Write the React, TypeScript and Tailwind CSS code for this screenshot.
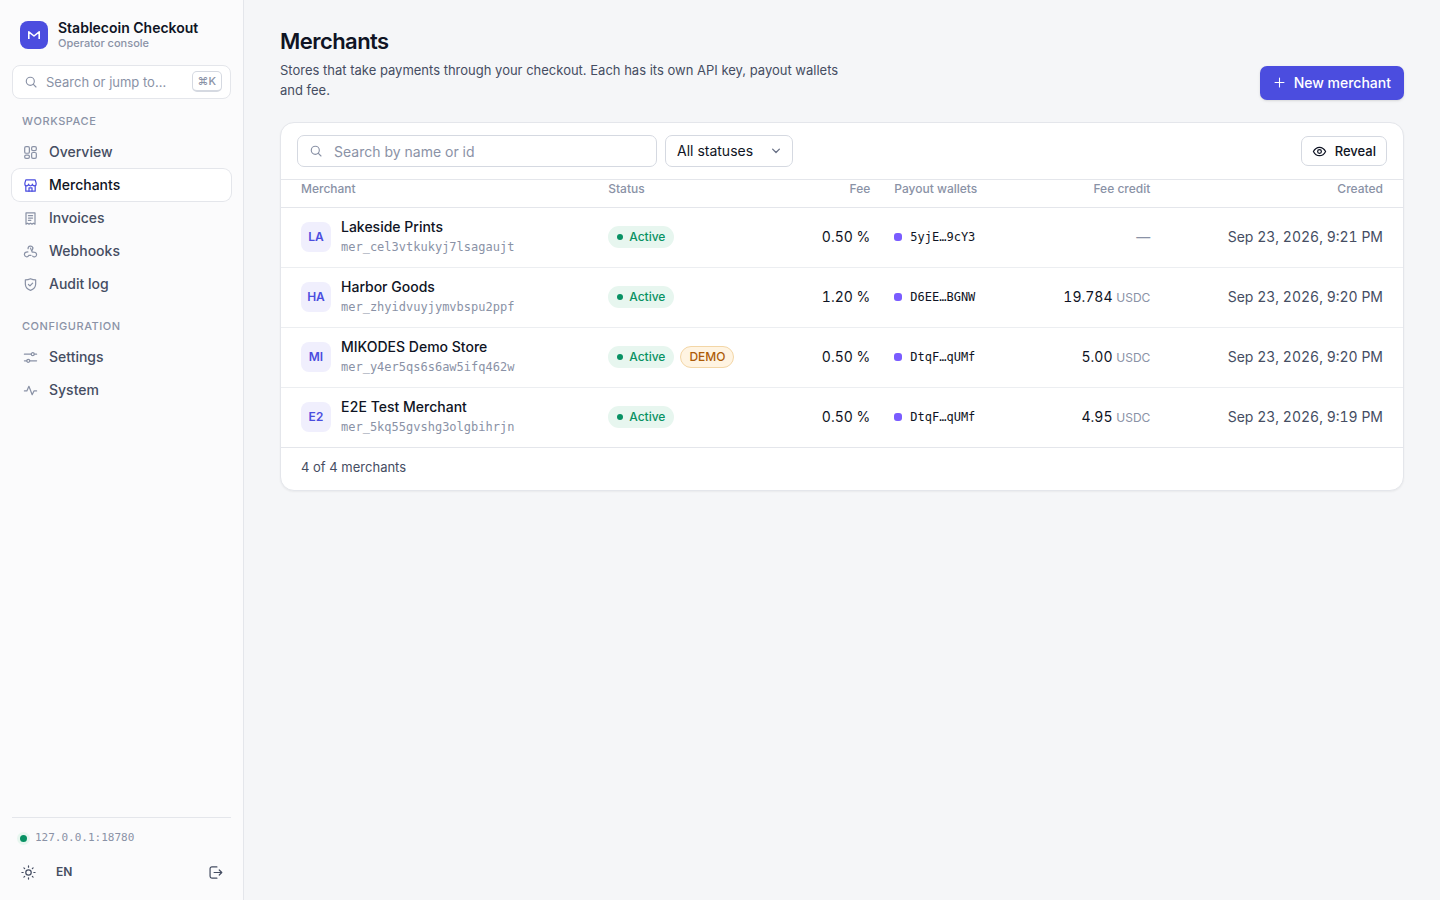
import React, { useState } from 'react';

type IconProps = { className?: string; children: React.ReactNode };

const Icon = ({ className = 'size-[15px]', children }: IconProps) => (
  <svg
    className={`shrink-0 ${className}`}
    viewBox="0 0 16 16"
    fill="none"
    stroke="currentColor"
    strokeWidth="1.3"
    strokeLinecap="round"
    strokeLinejoin="round"
    aria-hidden="true"
  >
    {children}
  </svg>
);

const icons = {
  overview: (
    <>
      <rect x="1.8" y="1.8" width="5" height="7" rx="1.4" />
      <rect x="9.2" y="1.8" width="5" height="4.2" rx="1.4" />
      <rect x="1.8" y="10.8" width="5" height="3.4" rx="1.4" />
      <rect x="9.2" y="8" width="5" height="6.2" rx="1.4" />
    </>
  ),
  merchants: (
    <>
      <path d="M3 2h10l1 3.5v.8a2 2 0 0 1-4 .1 2 2 0 0 1-4 0 2 2 0 0 1-4-.1v-.8z" />
      <path d="M3 8.200v5.800h10V8.200" />
      <path d="M6.400 14v-3.500h3.200V14" />
    </>
  ),
  invoices: (
    <>
      <path d="M3.200 2h9.600v12l-1.600-1-1.600 1L8 13l-1.600 1-1.600-1-1.600 1z" />
      <path d="M5.800 5h4.400M5.800 7.500h4.400M5.800 10h2.500" />
    </>
  ),
  webhooks: (
    <>
      <path d="M5.200 8.400c-2.300 0-3.700 1.300-3.700 2.900a2.400 2.400 0 0 0 4.600.9h2.400" />
      <path d="M5.400 5A2.600 2.600 0 0 1 10.500 4.200" />
      <path d="M8 4.400l1.900 4.300c2.600-.5 4.600.8 4.600 2.700a2.400 2.400 0 0 1-4.200 1.500" />
      <path d="M10.500 4.200 10 6.500" />
    </>
  ),
  audit: (
    <>
      <path d="M8 1.800c1.700.8 3.500 1.200 5.500 1.300v4.400c0 3.300-2.100 5.600-5.500 6.800-3.400-1.200-5.500-3.500-5.500-6.800V3.100C4.500 3 6.300 2.600 8 1.800z" />
      <path d="m5.800 8 1.600 1.500 2.900-3" />
    </>
  ),
  settings: (
    <>
      <path d="M1.500 4.500h7.300M12 4.500h2.500M1.500 11.500H4M7.200 11.500h7.300" />
      <circle cx="10.400" cy="4.500" r="1.600" />
      <circle cx="5.600" cy="11.500" r="1.600" />
    </>
  ),
  system: <path d="M1.500 8.500h2.600L6.300 3.500l3.500 9 1.900-4h2.800" />,
  search: (
    <>
      <circle cx="7.200" cy="7.200" r="4.600" />
      <path d="m10.700 10.700 3 3" />
    </>
  ),
  sun: (
    <>
      <circle cx="8" cy="8" r="2.900" />
      <path d="M8 1v1.300M8 13.700V15M1 8h1.300M13.700 8H15M3.100 3.100l.8.8M12.100 12.100l.8.8M3.100 12.900l.8-.8M12.100 3.900l.8-.8" />
    </>
  ),
  logout: (
    <>
      <path d="M9.500 2H4.200a2 2 0 0 0-2 2v8a2 2 0 0 0 2 2h5.300" />
      <path d="M6.500 8h8M12 5.300 14.700 8 12 10.700" />
    </>
  ),
  eye: (
    <>
      <path d="M1.500 8S3.800 3.500 8 3.500 14.500 8 14.500 8 12.200 12.500 8 12.500 1.500 8 1.500 8z" />
      <circle cx="8" cy="8" r="2" />
    </>
  ),
  plus: <path d="M8 2.500v11M2.500 8h11" />,
  chevron: <path d="m3.500 5.500 4.500 4.500 4.500-4.500" strokeWidth="1.8" />,
};

const workspace = [
  { label: 'Overview', icon: icons.overview },
  { label: 'Merchants', icon: icons.merchants, active: true },
  { label: 'Invoices', icon: icons.invoices },
  { label: 'Webhooks', icon: icons.webhooks },
  { label: 'Audit log', icon: icons.audit },
];

const configuration = [
  { label: 'Settings', icon: icons.settings },
  { label: 'System', icon: icons.system },
];

const merchants = [
  { initials: 'LA', name: 'Lakeside Prints', id: 'mer_cel3vtkukyj7lsagaujt', fee: '0.50 %', wallet: '5yjE…9cY3', credit: '', created: 'Sep 23, 2026, 9:21 PM' },
  { initials: 'HA', name: 'Harbor Goods', id: 'mer_zhyidvuyjymvbspu2ppf', fee: '1.20 %', wallet: 'D6EE…BGNW', credit: '19.784', created: 'Sep 23, 2026, 9:20 PM' },
  { initials: 'MI', name: 'MIKODES Demo Store', id: 'mer_y4er5qs6s6aw5ifq462w', demo: true, fee: '0.50 %', wallet: 'DtqF…qUMf', credit: '5.00', created: 'Sep 23, 2026, 9:20 PM' },
  { initials: 'E2', name: 'E2E Test Merchant', id: 'mer_5kq55gvshg3olgbihrjn', fee: '0.50 %', wallet: 'DtqF…qUMf', credit: '4.95', created: 'Sep 23, 2026, 9:19 PM' },
];

type NavItem = { label: string; icon: React.ReactNode; active?: boolean };

const NavGroup = ({ title, items }: { title: string; items: NavItem[] }) => (
  <div>
    <h2 className="px-[10px] text-[11px] leading-4 font-medium tracking-wider text-[#8a92a6] uppercase">{title}</h2>
    <ul className="mt-[7px] flex flex-col gap-px">
      {items.map((item) => (
        <li key={item.label}>
          <a
            href="#"
            aria-current={item.active ? 'page' : undefined}
            className={
              item.active
                ? 'flex h-8 items-center gap-[11px] rounded-lg bg-white px-[11px] font-medium text-[#0f1424] ring-1 ring-[#e4e6eb]'
                : 'flex h-8 items-center gap-[11px] rounded-lg px-[11px] font-medium text-[#454d62]'
            }
          >
            <span className={item.active ? 'text-[#4b4ddf]' : 'text-[#8a92a6]'}>
              <Icon>{item.icon}</Icon>
            </span>
            {item.label}
          </a>
        </li>
      ))}
    </ul>
  </div>
);

const Sidebar = () => (
  <aside className="flex w-[244px] shrink-0 flex-col border-r border-[#e4e6eb] bg-[#fbfbfc] px-3 pt-5 pb-[13px]">
    <div className="flex items-center gap-[10px] px-2">
      <div className="flex size-7 items-center justify-center rounded-lg bg-[#4b4ddf] text-white">
        <svg className="size-4" viewBox="0 0 16 16" fill="none" stroke="currentColor" strokeWidth="1.6" aria-hidden="true">
          <path d="M2.800 12V4.800L8 9l5.200-4.200V12" strokeLinejoin="round" />
        </svg>
      </div>
      <div>
        <p className="leading-4 font-semibold">Stablecoin Checkout</p>
        <p className="text-[11px] leading-[14px] font-medium text-[#8a92a6]">Operator console</p>
      </div>
    </div>

    <button type="button" className="mt-[15px] flex h-[34px] items-center gap-2 rounded-lg border border-[#e4e6eb] bg-white pr-2 pb-px pl-[11px] text-[13px] text-[#8a92a6]">
      <Icon className="size-[14px]">{icons.search}</Icon>
      <span className="flex-1 text-left">Search or jump to…</span>
      <kbd className="rounded-[5px] border border-b-2 border-[#d5d9e1] bg-white px-[5px] font-['Inter',sans-serif] text-[11px] leading-[18px] font-medium">⌘K</kbd>
    </button>

    <nav className="mt-[14px] flex flex-col gap-[18px]">
      <NavGroup title="Workspace" items={workspace} />
      <NavGroup title="Configuration" items={configuration} />
    </nav>

    <div className="mt-auto border-t border-[#e4e6eb] pt-3">
      <div className="flex items-center gap-2 px-2">
        <span className="size-[7px] rounded-full bg-[#079163] ring-3 ring-[#e7f6ef]" />
        <span className="font-['DejaVu_Sans_Mono',monospace] text-[11px] leading-4 text-[#8a92a6]">127.0.0.1:18780</span>
      </div>
      <div className="mt-[11px] flex items-center text-[#454d62]">
        <button type="button" aria-label="Toggle theme" className="flex h-[30px] w-8 items-center justify-center">
          <Icon>{icons.sun}</Icon>
        </button>
        <button type="button" className="ml-1 h-[30px] px-2 text-xs font-semibold">EN</button>
        <button type="button" aria-label="Sign out" className="ml-auto flex h-[30px] w-8 items-center justify-center">
          <Icon>{icons.logout}</Icon>
        </button>
      </div>
    </div>
  </aside>
);

const MerchantsTable = () => (
  <table className="w-full whitespace-nowrap">
    <thead>
      <tr className="h-[27px] border-b border-[#e4e6eb] text-xs leading-4 text-[#8a92a6] *:pb-2 *:font-medium">
        <th scope="col" className="pr-3 pl-5 text-left">Merchant</th>
        <th scope="col" className="px-3 text-left">Status</th>
        <th scope="col" className="px-3 text-right">Fee</th>
        <th scope="col" className="px-3 text-left">Payout wallets</th>
        <th scope="col" className="px-3 text-right">Fee credit</th>
        <th scope="col" className="pr-5 pl-3 text-right">Created</th>
      </tr>
    </thead>
    <tbody>
      {merchants.map((m) => (
        <tr key={m.id} className="h-[60px] border-b border-[#eceef1] tabular-nums last:border-b-0">
          <td className="pr-3 pl-5">
            <div className="flex items-center gap-[10px]">
              <span className="flex size-[30px] items-center justify-center rounded-lg bg-[#f0effd] text-xs font-semibold text-[#4b4ddf]">
                {m.initials}
              </span>
              <div>
                <p className="leading-5 font-medium">{m.name}</p>
                <p className="font-['DejaVu_Sans_Mono',monospace] text-xs leading-5 text-[#8a92a6]">{m.id}</p>
              </div>
            </div>
          </td>
          <td className="px-3">
            <div className="flex gap-[6px] text-xs font-medium">
              <span className="flex h-[22px] items-center gap-[6px] rounded-full bg-[#e7f6ef] px-[9px] text-[#079163]">
                <span className="size-[6px] rounded-full bg-[#079163]" />
                Active
              </span>
              {m.demo && (
                <span className="flex h-[22px] items-center rounded-full border border-[#f3d6a6] bg-[#fff4e2] px-2 text-[#ad5c08]">DEMO</span>
              )}
            </div>
          </td>
          <td className="px-3 text-right">{m.fee}</td>
          <td className="px-3">
            <div className="flex items-center gap-2">
              <span className="size-2 rounded-[3px] bg-[#7a5cff]" />
              <span className="font-['DejaVu_Sans_Mono',monospace] text-xs">{m.wallet}</span>
            </div>
          </td>
          <td className="px-3 text-right">
            {m.credit ? (
              <>
                {m.credit} <span className="text-xs text-[#8a92a6]">USDC</span>
              </>
            ) : (
              <span className="text-[#8a92a6]">—</span>
            )}
          </td>
          <td className="pr-5 pl-3 text-right text-[#454d62]">{m.created}</td>
        </tr>
      ))}
    </tbody>
  </table>
);

const App = () => {
  const [query, setQuery] = useState('');

  return (
    <div className="flex min-h-screen bg-[#f5f6f8] font-['Inter',sans-serif] text-sm leading-5 text-[#0f1424]">
      <Sidebar />

      <main className="min-w-0 flex-1 px-9 pt-7">
        <header className="flex items-end justify-between gap-6">
          <div>
            <h1 className="text-[22px] leading-[26px] font-semibold tracking-tight">Merchants</h1>
            <p className="mt-[6px] max-w-[580px] text-[13px] text-[#454d62]">
              Stores that take payments through your checkout. Each has its own API key, payout wallets and fee.
            </p>
          </div>
          <button
            type="button"
            className="flex h-[34px] shrink-0 items-center gap-2 rounded-[7px] bg-[#4b4ddf] px-[13px] pb-px font-medium text-white shadow-sm"
          >
            <Icon className="size-[13px]">{icons.plus}</Icon>
            New merchant
          </button>
        </header>

        <section className="mt-[22px] overflow-hidden rounded-[14px] border border-[#e4e6eb] bg-white shadow-xs">
          <div className="flex items-center gap-2 border-b border-[#e4e6eb] px-4 py-3">
            <label className="relative w-[360px]">
              <span className="absolute inset-y-0 left-3 flex items-center text-[#8a92a6]">
                <Icon className="size-[14px]">{icons.search}</Icon>
              </span>
              <input
                type="text"
                aria-label="Search merchants"
                placeholder="Search by name or id"
                value={query}
                onChange={(e) => setQuery(e.target.value)}
                className="block h-8 w-full rounded-[7px] border border-[#d5d9e1] bg-white pr-3 pl-9 placeholder:text-[#8a92a6]"
              />
            </label>
            <label className="relative w-32">
              <select aria-label="Status" className="block h-8 w-full appearance-none rounded-[7px] border border-[#d5d9e1] bg-white pr-8 pl-[11px]">
                <option>All statuses</option>
                <option>Active</option>
                <option>Paused</option>
              </select>
              <span className="pointer-events-none absolute inset-y-0 right-[11px] flex items-center text-[#6b7388]">
                <Icon className="size-3">{icons.chevron}</Icon>
              </span>
            </label>
            <button type="button" className="ml-auto flex h-[30px] items-center gap-2 rounded-[7px] border border-[#d5d9e1] bg-white px-[10px] text-[13px] font-medium">
              <Icon>{icons.eye}</Icon>
              Reveal
            </button>
          </div>

          <MerchantsTable />

          <footer className="border-t border-[#e4e6eb] px-5 pt-[9px] pb-[13px] text-[13px] text-[#454d62]">4 of 4 merchants</footer>
        </section>
      </main>
    </div>
  );
};

export default App;
